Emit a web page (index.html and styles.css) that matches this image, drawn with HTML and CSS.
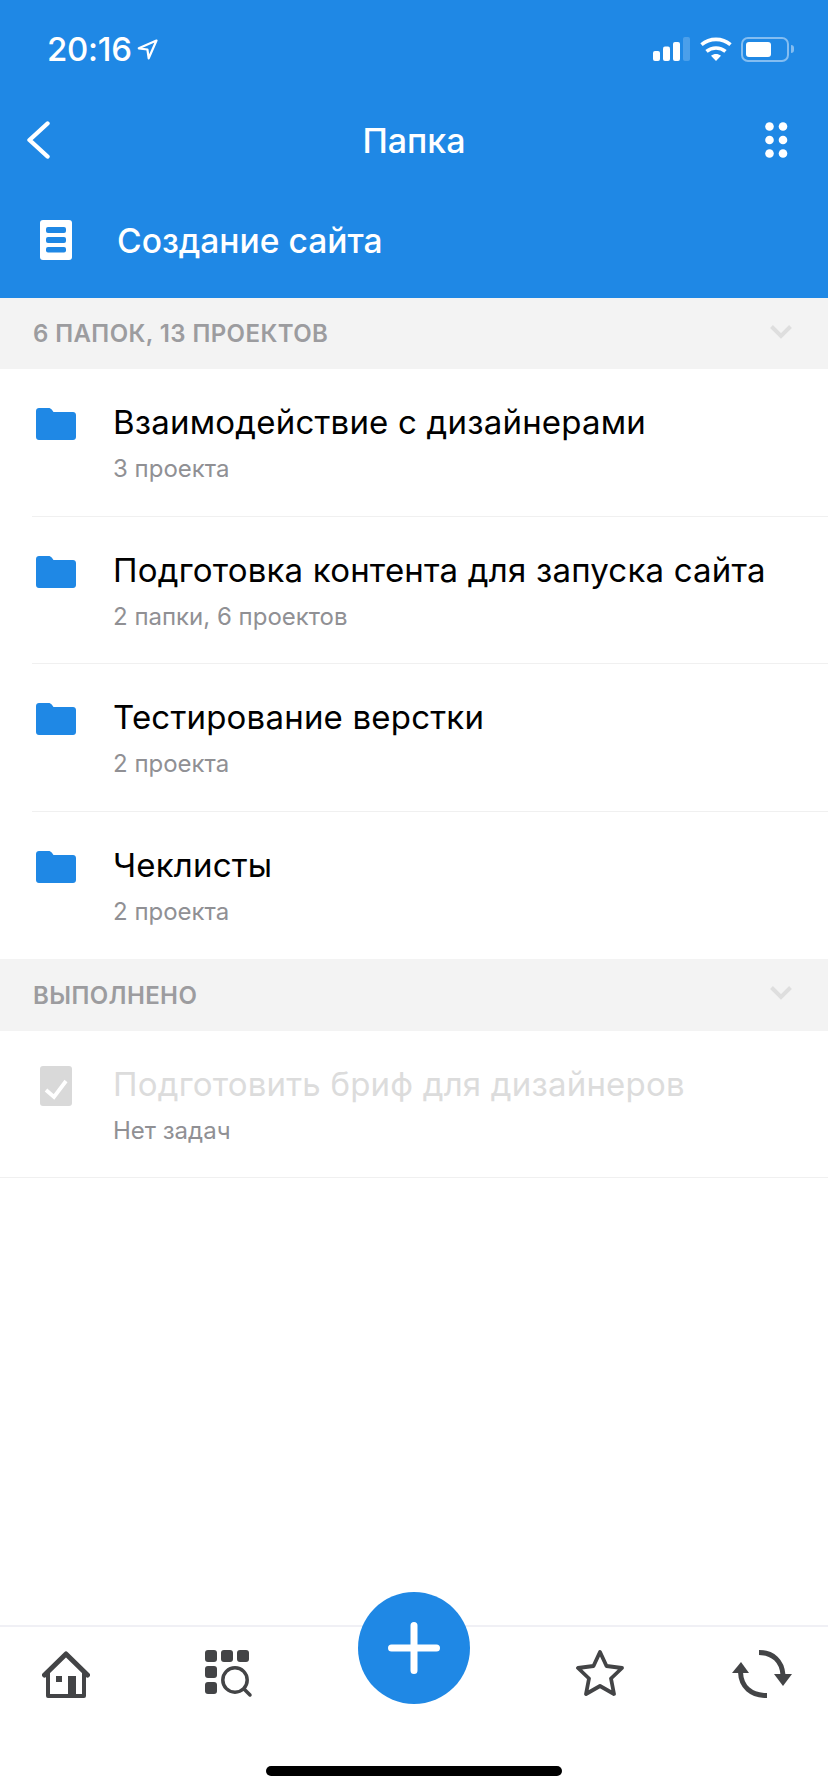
FILE: index.html
```html
<!DOCTYPE html>
<html lang="ru">
<head>
  <meta charset="UTF-8">
  <meta name="viewport" content="width=device-width, initial-scale=1.0">
  <title>Папка</title>
  <link rel="stylesheet" href="styles.css">
</head>
<body>
  <div class="app">
    <!-- header -->
    <div class="header">
      <div class="status-bar">
        <div class="clock">
          <span>20:16</span>
          <svg class="loc-icon" viewBox="0 0 21 21"><path d="M19.500 1.500 1.800 9.300l8.600 1.200 1.300 8.800z" fill="none" stroke="#fff" stroke-width="2.200" stroke-linejoin="round"/></svg>
        </div>
        <div class="status-icons">
          <svg class="signal-icon" viewBox="0 0 37 24">
            <rect x="0" y="14" width="7" height="10" rx="2" fill="#fff"/>
            <rect x="10" y="9.500" width="7" height="14.500" rx="2" fill="#fff"/>
            <rect x="20" y="5" width="7" height="19" rx="2" fill="#fff"/>
            <rect x="30" y="0" width="7" height="24" rx="2" fill="#fff" opacity=".2"/>
          </svg>
          <svg class="wifi-icon" viewBox="0 0 32 24">
            <path d="M16 24l-5-5.300c3-2.300 7-2.300 10 0z" fill="#fff"/>
            <path d="M6.500 14.300C12 9.800 20 9.800 25.500 14.300" fill="none" stroke="#fff" stroke-width="3.600"/>
            <path d="M1.500 7.600C9.800.6 22.200.6 30.500 7.600" fill="none" stroke="#fff" stroke-width="3.600"/>
          </svg>
          <div class="battery"><div class="battery-level"></div></div>
          <div class="battery-cap"></div>
        </div>
      </div>
      <div class="nav-bar">
        <svg class="back-icon" viewBox="0 0 24 38"><path d="M21.500 2.500 3.500 19l18 16.500" fill="none" stroke="#fff" stroke-width="4.400" stroke-linecap="round" stroke-linejoin="round"/></svg>
        <span class="nav-title">Папка</span>
        <svg class="more-icon" viewBox="0 0 23 36">
          <circle cx="4.500" cy="4.500" r="4.300" fill="#fff"/><circle cx="18" cy="4.500" r="4.300" fill="#fff"/>
          <circle cx="4.500" cy="18" r="4.300" fill="#fff"/><circle cx="18" cy="18" r="4.300" fill="#fff"/>
          <circle cx="4.500" cy="31.500" r="4.300" fill="#fff"/><circle cx="18" cy="31.500" r="4.300" fill="#fff"/>
        </svg>
      </div>
      <div class="current">
        <svg class="doc-icon" viewBox="0 0 32 40">
          <rect width="32" height="40" rx="3" fill="#fff"/>
          <rect x="6" y="7" width="20" height="6" rx="2" fill="#1f88e5"/>
          <rect x="6" y="17" width="20" height="6" rx="2" fill="#1f88e5"/>
          <rect x="6" y="27" width="20" height="5.500" rx="2" fill="#1f88e5"/>
        </svg>
        <span>Создание сайта</span>
      </div>
    </div>

    <!-- list -->
    <div class="list">
      <div class="section-head">
        <span>6 ПАПОК, 13 ПРОЕКТОВ</span>
        <svg class="chevron" viewBox="0 0 24 16"><path d="M2.500 2.500 12 12l9.500-9.500" fill="none" stroke="#dedede" stroke-width="4"/></svg>
      </div>
      <div class="row">
        <svg class="folder-icon" viewBox="0 0 40 32"><path d="M3 0h9.500c1.500 0 2.300.6 3.200 1.600L17.500 4H37c1.700 0 3 1.300 3 3v22c0 1.700-1.300 3-3 3H3c-1.700 0-3-1.300-3-3V3c0-1.700 1.300-3 3-3z" fill="#1f88e5"/></svg>
        <div class="row-text">
          <div class="row-title">Взаимодействие с дизайнерами</div>
          <div class="row-sub">3 проекта</div>
        </div>
      </div>
      <div class="row">
        <svg class="folder-icon" viewBox="0 0 40 32"><path d="M3 0h9.500c1.500 0 2.300.6 3.200 1.600L17.500 4H37c1.700 0 3 1.300 3 3v22c0 1.700-1.300 3-3 3H3c-1.700 0-3-1.300-3-3V3c0-1.700 1.300-3 3-3z" fill="#1f88e5"/></svg>
        <div class="row-text">
          <div class="row-title">Подготовка контента для запуска сайта</div>
          <div class="row-sub">2 папки, 6 проектов</div>
        </div>
      </div>
      <div class="row">
        <svg class="folder-icon" viewBox="0 0 40 32"><path d="M3 0h9.500c1.500 0 2.300.6 3.200 1.600L17.500 4H37c1.700 0 3 1.300 3 3v22c0 1.700-1.300 3-3 3H3c-1.700 0-3-1.300-3-3V3c0-1.700 1.300-3 3-3z" fill="#1f88e5"/></svg>
        <div class="row-text">
          <div class="row-title">Тестирование верстки</div>
          <div class="row-sub">2 проекта</div>
        </div>
      </div>
      <div class="row row-last">
        <svg class="folder-icon" viewBox="0 0 40 32"><path d="M3 0h9.500c1.500 0 2.300.6 3.200 1.600L17.500 4H37c1.700 0 3 1.300 3 3v22c0 1.700-1.300 3-3 3H3c-1.700 0-3-1.300-3-3V3c0-1.700 1.300-3 3-3z" fill="#1f88e5"/></svg>
        <div class="row-text">
          <div class="row-title">Чеклисты</div>
          <div class="row-sub">2 проекта</div>
        </div>
      </div>
      <div class="section-head section-done">
        <span>ВЫПОЛНЕНО</span>
        <svg class="chevron" viewBox="0 0 24 16"><path d="M2.500 2.500 12 12l9.500-9.500" fill="none" stroke="#dedede" stroke-width="4"/></svg>
      </div>
      <div class="row row-done">
        <svg class="check-icon" viewBox="0 0 32 40">
          <rect width="32" height="40" rx="3" fill="#d9d9d9"/>
          <path d="M6 24l8 7 12-16" fill="none" stroke="#fff" stroke-width="3.800"/>
        </svg>
        <div class="row-text">
          <div class="row-title">Подготовить бриф для дизайнеров</div>
          <div class="row-sub">Нет задач</div>
        </div>
      </div>
    </div>

    <!-- bottom tabs -->
    <div class="tab-bar">
      <div class="tabs">
        <svg class="tab-icon home-icon" viewBox="0 0 48 48">
          <path d="M2.500 25 24 4l21.500 21" fill="none" stroke="#434446" stroke-width="5" stroke-linecap="round" stroke-linejoin="round"/>
          <path d="M6 22v24h36V22" fill="none" stroke="#434446" stroke-width="4" stroke-linejoin="round"/>
          <rect x="14" y="26" width="6" height="6" fill="#434446"/>
          <rect x="26" y="26" width="8" height="20" fill="#434446"/>
        </svg>
        <svg class="tab-icon search-icon" viewBox="0 0 48 48">
          <rect x="0" y="0" width="12" height="12" rx="3" fill="#434446"/>
          <rect x="16" y="0" width="12" height="12" rx="3" fill="#434446"/>
          <rect x="32" y="0" width="12" height="12" rx="3" fill="#434446"/>
          <rect x="0" y="16" width="12" height="12" rx="3" fill="#434446"/>
          <rect x="0" y="32" width="12" height="12" rx="3" fill="#434446"/>
          <circle cx="30" cy="30" r="12.200" fill="none" stroke="#434446" stroke-width="3.500"/>
          <path d="M39 39l6 6" stroke="#434446" stroke-width="3.500" stroke-linecap="round"/>
        </svg>
        <div class="tab-gap"></div>
        <svg class="tab-icon star-icon" viewBox="0 0 48 48">
          <path d="M24 2l6.500 14L46 18 35 28.500 38 44l-14-8-14 8 3-15.500L2 18l15.500-2z" fill="none" stroke="#434446" stroke-width="3.800" stroke-linejoin="round"/>
        </svg>
        <svg class="tab-icon sync-icon" viewBox="0 0 60 48">
          <path d="M27 2.500C41 2.500 50 11 51 25" fill="none" stroke="#434446" stroke-width="5"/>
          <path d="M42 24h18l-9 12z" fill="#434446"/>
          <path d="M35 45.500C19 45.500 9 37 8.500 22" fill="none" stroke="#434446" stroke-width="5"/>
          <path d="M0 23h17L9 12z" fill="#434446"/>
        </svg>
      </div>
      <div class="home-bar"></div>
    </div>

    <div class="fab">
      <svg viewBox="0 0 52 52"><path d="M26 3.500v45M3.500 26h45" stroke="#fff" stroke-width="7" stroke-linecap="round"/></svg>
    </div>
  </div>
</body>
</html>
```

FILE: styles.css
```css
body {
  margin: 0;
  background: #fff;
  font-family: Inter, "Noto Sans", sans-serif;
}

.app {
  position: relative;
  width: 828px;
  height: 1792px;
  display: flex;
  flex-direction: column;
  overflow: hidden;
}

/* header */
.header {
  height: 298px;
  background: #1f88e5;
  color: #fff;
}

.status-bar {
  height: 98px;
  padding: 0 34px 0 47px;
  display: flex;
  justify-content: space-between;
  align-items: center;
}

.clock {
  display: flex;
  align-items: center;
  font-size: 33px;
  font-weight: 500;
  letter-spacing: -0.3px;
}

.loc-icon {
  width: 21px;
  height: 21px;
  margin-left: 5px;
}

.status-icons {
  display: flex;
  align-items: center;
}

.signal-icon {
  width: 37px;
  height: 24px;
}

.wifi-icon {
  width: 32px;
  height: 24px;
  margin-left: 10px;
}

.battery {
  width: 48px;
  height: 25px;
  margin-left: 9px;
  padding: 3px;
  box-sizing: border-box;
  border: 2px solid rgba(255, 255, 255, 0.45);
  border-radius: 7px;
}

.battery-level {
  width: 25px;
  height: 100%;
  background: #fff;
  border-radius: 3px;
}

.battery-cap {
  width: 3px;
  height: 8px;
  margin-left: 2px;
  background: rgba(255, 255, 255, 0.45);
  border-radius: 0 3px 3px 0;
}

.nav-bar {
  height: 84px;
  padding: 0 40px;
  display: grid;
  grid-template-columns: 1fr auto 1fr;
  align-items: center;
}

.back-icon {
  width: 24px;
  height: 38px;
  margin-left: -14px;
}

.nav-title {
  font-size: 34px;
  font-weight: 500;
}

.more-icon {
  width: 23px;
  height: 36px;
  justify-self: end;
}

.current {
  height: 116px;
  padding-left: 40px;
  display: flex;
  align-items: center;
  font-size: 33.6px;
  font-weight: 500;
}

.doc-icon {
  width: 32px;
  height: 40px;
  margin-right: 45px;
}

/* list */
.list {
  flex: 1;
}

.section-head {
  height: 71px;
  padding: 0 35px 0 33px;
  background: #f3f3f3;
  display: flex;
  justify-content: space-between;
  align-items: center;
  color: #9c9c9f;
  font-size: 24px;
  font-weight: 600;
  letter-spacing: 0.4px;
}

.section-done {
  height: 72px;
}

.chevron {
  width: 24px;
  height: 16px;
  margin-bottom: 4px;
}

.row {
  height: 147.5px;
  box-sizing: border-box;
  margin-left: 32px;
  padding-left: 4px;
  border-bottom: 1px solid #f0f0f0;
  display: flex;
  align-items: flex-start;
}

.row-last {
  border-bottom: none;
}

.row-done {
  height: 147px;
  margin-left: 0;
  padding-left: 40px;
}

.folder-icon {
  width: 40px;
  height: 32px;
  margin: 39px 37px 0 0;
}

.check-icon {
  width: 32px;
  height: 40px;
  margin: 35px 41px 0 0;
}

.row-title {
  margin-top: 33px;
  font-size: 33px;
  line-height: 40px;
  letter-spacing: 0.2px;
  color: #000;
}

.row-sub {
  margin-top: 13px;
  font-size: 24px;
  line-height: 28px;
  color: #909094;
}

.row-done .row-title {
  color: #dcdcdc;
}

/* bottom tabs */
.tab-bar {
  height: 167px;
  box-sizing: border-box;
  border-top: 2px solid #f0f0f5;
  display: flex;
  flex-direction: column;
  align-items: center;
}

.tabs {
  width: 100%;
  height: 139px;
  box-sizing: border-box;
  padding: 23px 36px 0 42px;
  display: flex;
  align-items: flex-start;
}

.tab-icon {
  width: 48px;
  height: 48px;
}

.search-icon {
  margin-left: 115px;
}

.sync-icon {
  width: 60px;
  margin-left: 108px;
}

.tab-gap {
  flex: 1;
}

.home-bar {
  width: 296px;
  height: 10px;
  background: #000;
  border-radius: 5px;
}

.fab {
  position: absolute;
  left: 358px;
  top: 1592px;
  width: 112px;
  height: 112px;
  background: #1f88e5;
  border-radius: 50%;
  display: flex;
  justify-content: center;
  align-items: center;
}

.fab svg {
  width: 52px;
  height: 52px;
}
```
